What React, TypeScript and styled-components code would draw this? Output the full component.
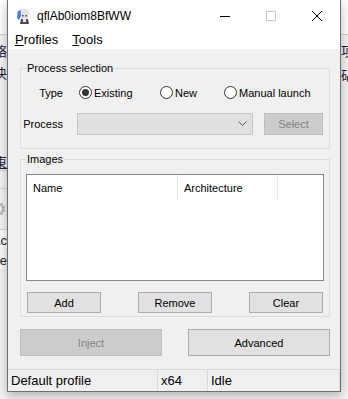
import React from 'react';
import styled, { createGlobalStyle } from 'styled-components';

const GlobalStyle = createGlobalStyle`
  html, body {
    margin: 0;
    padding: 0;
  }
  body {
    width: 348px;
    height: 399px;
    overflow: hidden;
    background: #f0f0f0;
    font-family: "Liberation Sans", Arial, sans-serif;
    color: #000;
  }
`;

const Desktop = styled.div`
  display: flex;
  width: 348px;
  height: 399px;
  overflow: hidden;
`;

// bits of the app sitting behind the dialog
const Strip = styled.div`
  width: 7px;
  flex-shrink: 0;
  overflow: hidden;
  display: flex;
  flex-direction: column;
  background: #f3f3f3;
`;

const StripRow = styled.div<{ $h: number; $bg?: string; $line?: boolean; $side: 'left' | 'right' }>`
  height: ${p => p.$h}px;
  flex-shrink: 0;
  box-sizing: border-box;
  display: flex;
  align-items: center;
  justify-content: ${p => (p.$side === 'left' ? 'flex-end' : 'flex-start')};
  background: ${p => p.$bg || 'transparent'};
  border-bottom: ${p => (p.$line ? '1px solid #d2d2d2' : 'none')};
  white-space: nowrap;
  font-family: "Liberation Sans", "Noto Sans CJK SC", sans-serif;
  font-size: 13px;
  color: #1c2233;
`;

const Window = styled.div`
  width: 334px;
  height: 392px;
  flex-shrink: 0;
  box-sizing: border-box;
  display: flex;
  flex-direction: column;
  border: 1px solid #6f6f6f;
  border-top: none;
  box-shadow: 0 3px 10px rgba(0, 0, 0, 0.28);
  position: relative;
  z-index: 1;
`;

const TitleBar = styled.div`
  height: 31px;
  display: flex;
  align-items: center;
  background: #fff;
`;

const AppIcon = styled.svg`
  margin-left: 8px;
  flex-shrink: 0;
`;

const Title = styled.span`
  margin-left: 5px;
  font-size: 12px;
  flex: 1;
`;

const CaptionButton = styled.div`
  width: 46px;
  height: 31px;
  display: flex;
  align-items: center;
  justify-content: center;
`;

const MenuBar = styled.div`
  height: 18px;
  display: flex;
  align-items: center;
  background: #fff;
`;

const MenuItem = styled.span`
  padding: 0 7px;
  font-size: 13px;
  line-height: 18px;
`;

const Client = styled.div`
  flex: 1;
  display: flex;
  flex-direction: column;
  background: #f0f0f0;
  padding: 12px 10px 0 12px;
`;

const GroupBox = styled.fieldset<{ $mt?: number }>`
  margin: ${p => p.$mt || 0}px 0 0;
  padding: 0;
  min-width: 0;
  border: 1px solid #dcdcdc;
`;

const Legend = styled.legend`
  margin-left: 5px;
  padding: 0 1px;
  font-size: 11px;
  line-height: 14px;
`;

const SelectionGrid = styled.div`
  display: grid;
  grid-template-columns: 42px auto;
  grid-template-rows: 21px 22px;
  column-gap: 14px;
  row-gap: 10px;
  align-items: center;
  padding: 7px 0 13px;
`;

const FieldLabel = styled.span`
  text-align: right;
  font-size: 11px;
`;

const RadioGroup = styled.div`
  display: flex;
  align-items: center;
  margin-left: 2px;
`;

const RadioOption = styled.label<{ $w?: number }>`
  width: ${p => (p.$w ? `${p.$w}px` : 'auto')};
  display: flex;
  align-items: center;
  gap: 2px;
  font-size: 11px;
`;

const RadioMark = styled.span<{ $checked?: boolean }>`
  width: 13px;
  height: 13px;
  box-sizing: border-box;
  border: 1px solid #333;
  border-radius: 50%;
  background: #fff;
  display: flex;
  align-items: center;
  justify-content: center;

  &::after {
    content: '';
    width: 7px;
    height: 7px;
    border-radius: 50%;
    background: ${p => (p.$checked ? '#333' : 'transparent')};
  }
`;

const ProcessRow = styled.div`
  display: flex;
  align-items: center;
  gap: 11px;
`;

const ComboBox = styled.div`
  width: 176px;
  height: 22px;
  box-sizing: border-box;
  border: 1px solid #c6c6c6;
  background: #e0e0e0;
  display: flex;
  align-items: center;
  justify-content: flex-end;
  padding-right: 5px;
`;

const Button = styled.button<{ $w: number; $h: number }>`
  width: ${p => p.$w}px;
  height: ${p => p.$h}px;
  box-sizing: border-box;
  margin: 0;
  padding: 0;
  border: 1px solid #adadad;
  background: #e1e1e1;
  color: #000;
  font-family: "Liberation Sans", Arial, sans-serif;
  font-size: 11px;

  &:disabled {
    border-color: #bfbfbf;
    background: #cccccc;
    color: #838383;
  }
`;

const ImagesBody = styled.div`
  padding: 8px 5px 3px;
`;

const ListView = styled.div`
  height: 107px;
  box-sizing: border-box;
  border: 1px solid #828790;
  background: #fff;
`;

const ListHeader = styled.div`
  display: flex;
  height: 25px;
`;

const HeaderCell = styled.div<{ $w: number }>`
  width: ${p => p.$w}px;
  box-sizing: border-box;
  border-right: 1px solid #e5e5e5;
  padding-left: 6px;
  display: flex;
  align-items: center;
  font-size: 11px;
`;

const ButtonRow = styled.div<{ $mt: number; $px?: number }>`
  display: flex;
  justify-content: space-between;
  margin-top: ${p => p.$mt}px;
  padding: 0 ${p => p.$px || 0}px;
`;

const StatusBar = styled.div`
  height: 22px;
  box-sizing: border-box;
  border-top: 1px solid #dadada;
  display: flex;
  background: #f0f0f0;
`;

const StatusPanel = styled.div<{ $w?: number }>`
  ${p => (p.$w ? `width: ${p.$w}px;` : 'flex: 1;')}
  box-sizing: border-box;
  border-right: 1px solid #dadada;
  padding-left: 3px;
  display: flex;
  align-items: center;
  font-size: 13px;
`;

const Gear = styled.span`
  color: #b4b4b4;
  font-family: "DejaVu Sans", sans-serif;
  font-size: 20px;
`;

const App: React.FC = () => {
  return (
    <Desktop>
      <GlobalStyle />
      <Strip>
        <StripRow $side="left" $h={35} $bg="#fff" $line />
        <StripRow $side="left" $h={30}>络</StripRow>
        <StripRow $side="left" $h={14}>决</StripRow>
        <StripRow $side="left" $h={73} />
        <StripRow $side="left" $h={19} $line><u>東</u></StripRow>
        <StripRow $side="left" $h={18} $line />
        <StripRow $side="left" $h={41} $line><Gear>⚙</Gear></StripRow>
        <StripRow $side="left" $h={21} $bg="#fafafa">Ac</StripRow>
        <StripRow $side="left" $h={18} $bg="#fafafa">te</StripRow>
      </Strip>

      <Window>
        <TitleBar>
          <AppIcon width="16" height="16" viewBox="0 0 16 16">
            <path d="M3 2 L8 0.5 L13 2 L13.5 7 L11 6 L5 6 L2.5 8 Z" fill="#dfe3ea" />
            <path d="M1.5 4 L4.5 1.5 L5 8 L3 12 L1 10 Z" fill="#3f86e0" />
            <rect x="5" y="5.5" width="7" height="5" rx="1.5" fill="#f3dcdc" />
            <rect x="6" y="7" width="1.5" height="1.5" fill="#3b3b5a" />
            <rect x="9.5" y="7" width="1.5" height="1.5" fill="#3b3b5a" />
            <path d="M5 11 L12 11 L13 16 L4 16 Z" fill="#4b4b55" />
            <rect x="7" y="11" width="3" height="3" fill="#e8e8ee" />
          </AppIcon>
          <Title>qflAb0iom8BfWW</Title>
          <CaptionButton>
            <svg width="10" height="10" viewBox="0 0 10 10">
              <path d="M0 5.5 H10" stroke="#000" strokeWidth="1" />
            </svg>
          </CaptionButton>
          <CaptionButton>
            <svg width="10" height="10" viewBox="0 0 10 10">
              <rect x="0.5" y="0.5" width="9" height="9" fill="none" stroke="#c8c8c8" strokeWidth="1" />
            </svg>
          </CaptionButton>
          <CaptionButton>
            <svg width="10" height="10" viewBox="0 0 10 10">
              <path d="M0 0 L10 10 M10 0 L0 10" stroke="#000" strokeWidth="1" />
            </svg>
          </CaptionButton>
        </TitleBar>

        <MenuBar>
          <MenuItem><u>P</u>rofiles</MenuItem>
          <MenuItem><u>T</u>ools</MenuItem>
        </MenuBar>

        <Client>
          <GroupBox>
            <Legend>Process selection</Legend>
            <SelectionGrid>
              <FieldLabel>Type</FieldLabel>
              <RadioGroup>
                <RadioOption $w={81}><RadioMark $checked />Existing</RadioOption>
                <RadioOption $w={64}><RadioMark />New</RadioOption>
                <RadioOption><RadioMark />Manual launch</RadioOption>
              </RadioGroup>
              <FieldLabel>Process</FieldLabel>
              <ProcessRow>
                <ComboBox>
                  <svg width="9" height="6" viewBox="0 0 9 6">
                    <path d="M0.5 0.5 L4.5 4.5 L8.5 0.5" fill="none" stroke="#555" strokeWidth="1" />
                  </svg>
                </ComboBox>
                <Button $w={59} $h={22} disabled>Select</Button>
              </ProcessRow>
            </SelectionGrid>
          </GroupBox>

          <GroupBox $mt={3}>
            <Legend>Images</Legend>
            <ImagesBody>
              <ListView>
                <ListHeader>
                  <HeaderCell $w={151}>Name</HeaderCell>
                  <HeaderCell $w={100}>Architecture</HeaderCell>
                </ListHeader>
              </ListView>
              <ButtonRow $mt={11} $px={1}>
                <Button $w={74} $h={21}>Add</Button>
                <Button $w={74} $h={21}>Remove</Button>
                <Button $w={74} $h={21}>Clear</Button>
              </ButtonRow>
            </ImagesBody>
          </GroupBox>

          <ButtonRow $mt={12}>
            <Button $w={142} $h={27} disabled>Inject</Button>
            <Button $w={142} $h={27}>Advanced</Button>
          </ButtonRow>
        </Client>

        <StatusBar>
          <StatusPanel $w={150}>Default profile</StatusPanel>
          <StatusPanel $w={50}>x64</StatusPanel>
          <StatusPanel>Idle</StatusPanel>
        </StatusBar>
      </Window>

      <Strip>
        <StripRow $side="right" $h={35} $bg="#fff" $line />
        <StripRow $side="right" $h={30}>项</StripRow>
        <StripRow $side="right" $h={18}>砧</StripRow>
      </Strip>
    </Desktop>
  );
};

export default App;
